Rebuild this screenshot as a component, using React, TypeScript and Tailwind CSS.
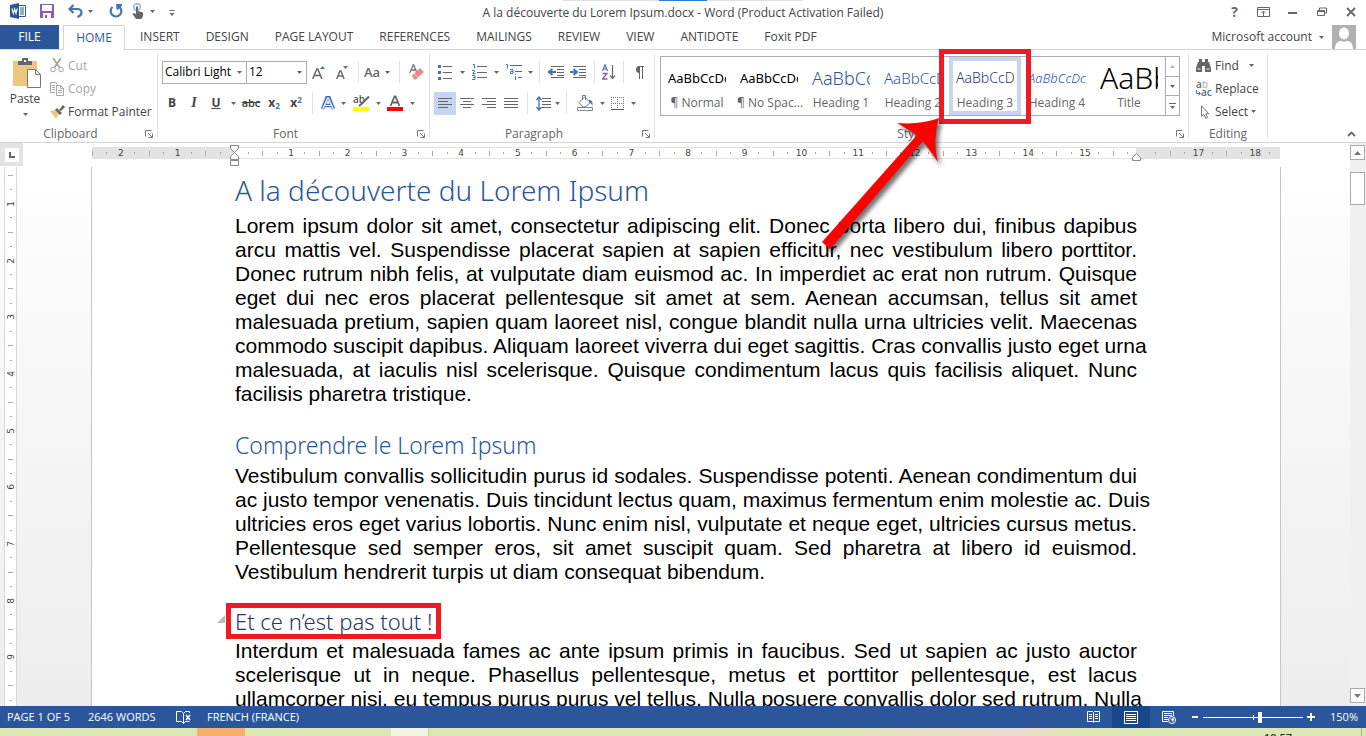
import { useState, type ReactNode } from 'react'
import clsx from 'clsx'

const TABS = ['INSERT', 'DESIGN', 'PAGE LAYOUT', 'REFERENCES', 'MAILINGS', 'REVIEW', 'VIEW', 'ANTIDOTE', 'Foxit PDF']

const STYLES = [
  { name: '¶ Normal', sample: 'AaBbCcDc', look: 'text-[13px] text-black' },
  { name: '¶ No Spac...', sample: 'AaBbCcDc', look: 'text-[13px] text-black' },
  { name: 'Heading 1', sample: 'AaBbCc', look: 'text-[18px] font-light text-[#2b579a]' },
  { name: 'Heading 2', sample: 'AaBbCcD', look: 'text-[15px] font-light text-[#2b579a]' },
  { name: 'Heading 3', sample: 'AaBbCcD', look: 'text-[14px] font-light text-[#1f3864]' },
  { name: 'Heading 4', sample: 'AaBbCcDc', look: 'text-[13px] italic font-light text-[#2b579a]' },
  { name: 'Title', sample: 'AaBb', look: 'text-[30px] font-light text-black' },
]

const RULER = ['2', '1', '', '1', '2', '3', '4', '5', '6', '7', '8', '9', '10', '11', '12', '13', '14', '15', '', '17', '18']
const VRULER = ['1', '2', '3', '4', '5', '6', '7', '8', '9', '10']

// one entry per line, broken where the document breaks
const INTRO = [
  'Lorem ipsum dolor sit amet, consectetur adipiscing elit. Donec porta libero dui, finibus dapibus',
  'arcu mattis vel. Suspendisse placerat sapien at sapien efficitur, nec vestibulum libero porttitor.',
  'Donec rutrum nibh felis, at vulputate diam euismod ac. In imperdiet ac erat non rutrum. Quisque',
  'eget dui nec eros placerat pellentesque sit amet at sem. Aenean accumsan, tellus sit amet',
  'malesuada pretium, sapien quam laoreet nisl, congue blandit nulla urna ultricies velit. Maecenas',
  'commodo suscipit dapibus. Aliquam laoreet viverra dui eget sagittis. Cras convallis justo eget urna',
  'malesuada, at iaculis nisl scelerisque. Quisque condimentum lacus quis facilisis aliquet. Nunc',
  'facilisis pharetra tristique.',
]

const SECOND = [
  'Vestibulum convallis sollicitudin purus id sodales. Suspendisse potenti. Aenean condimentum dui',
  'ac justo tempor venenatis. Duis tincidunt lectus quam, maximus fermentum enim molestie ac. Duis',
  'ultricies eros eget varius lobortis. Nunc enim nisl, vulputate et neque eget, ultricies cursus metus.',
  'Pellentesque sed semper eros, sit amet suscipit quam. Sed pharetra at libero id euismod.',
  'Vestibulum hendrerit turpis ut diam consequat bibendum.',
]

const THIRD = [
  'Interdum et malesuada fames ac ante ipsum primis in faucibus. Sed ut sapien ac justo auctor',
  'scelerisque ut in neque. Phasellus pellentesque, metus et porttitor pellentesque, est lacus',
  'ullamcorper nisi, eu tempus purus purus vel tellus. Nulla posuere convallis dolor sed rutrum. Nulla',
]

interface IconProps {
  w: number
  h: number
  children: ReactNode
  className?: string
}

function Icon({ w, h, children, className }: IconProps) {
  return (
    <svg width={w} height={h} viewBox={`0 0 ${w} ${h}`} fill="none" className={clsx('shrink-0', className)} aria-hidden="true">
      {children}
    </svg>
  )
}

function Caret({ className = 'text-[#666]' }: { className?: string }) {
  return (
    <Icon w={5} h={3} className={className}>
      <path d="M0 0h5L2.5 3z" fill="currentColor" />
    </Icon>
  )
}

function Tool({ label, className = 'w-[22px]', children }: { label: string; className?: string; children: ReactNode }) {
  return (
    <button type="button" aria-label={label} className={clsx('flex h-[23px] shrink-0 items-center justify-center hover:bg-[#d5e1f2]', className)}>
      {children}
    </button>
  )
}

function More({ label, className = 'w-2' }: { label: string; className?: string }) {
  return (
    <Tool label={`${label} options`} className={className}>
      <Caret />
    </Tool>
  )
}

function Sep() {
  return <span className="mx-[5px] h-[22px] w-px shrink-0 bg-[#e1e1e1]" />
}

function Group({ title, className, launcher = true, children }: { title: string; className: string; launcher?: boolean; children: ReactNode }) {
  return (
    <section aria-label={title} className={clsx('my-1 flex h-[84px] flex-col border-r border-[#e1e1e1]', className)}>
      <div className="h-[72px]">{children}</div>
      <div className={clsx('relative h-3 text-center leading-4 text-[#666]', launcher && 'pr-4')}>
        {title}
        {launcher && (
          <button type="button" aria-label={`${title} settings`} className="absolute right-1 top-1">
            <Icon w={8} h={8}>
              <path d="M.5 6.5v-6h6M3 3l4 4M7.500 3.500v4h-4" stroke="#777" />
            </Icon>
          </button>
        )}
      </div>
    </section>
  )
}

// horizontal text rows used by the alignment buttons
function Lines({ rows }: { rows: [number, number][] }) {
  return (
    <Icon w={14} h={10}>
      {rows.map(([x, width], i) => (
        <rect key={i} x={x} y={i * 3} width={width} height={1} fill="#666" />
      ))}
    </Icon>
  )
}

function TitleBar() {
  return (
    <header className="relative flex h-[25px] items-center justify-between">
      <div className="absolute inset-x-0 top-0 flex justify-center">
        <span className="h-px w-24 bg-[#e1e1e1]" />
        <span className="h-px w-12 bg-[#2b7cd3]" />
        <span className="h-px w-24 bg-[#e1e1e1]" />
      </div>
      <div className="flex items-center pb-[3px] pl-[10px]">
        <Icon w={16} h={16}>
          <path d="M8 2.500h7.500v11H8" fill="#fff" stroke="#2b579a" />
          <path d="M10 5h4M10 7h4M10 9h4M10 11h4" stroke="#2b579a" />
          <path d="M0 2l9-2v16l-9-2z" fill="#2b579a" />
          <path d="M2 5.500l1.300 5L4.700 6l1.300 4.500 1.300-5" stroke="#fff" strokeWidth="1.100" />
        </Icon>
        <button type="button" aria-label="Save" className="ml-[14px]">
          <Icon w={14} h={14}>
            <path d="M0 0h14v14H0z" fill="#8a5db0" />
            <path d="M2 1h10v6H2zM3 9h8v5H3z" fill="#fff" />
            <path d="M5 11h2v3H5z" fill="#8a5db0" />
          </Icon>
        </button>
        <button type="button" aria-label="Undo" className="ml-[14px]">
          <Icon w={16} h={14}>
            <path d="M5.500 1L1.500 5l4 4M2 5h7c3 0 4.500 1.500 4.500 3.500S12 12 9.500 13" stroke="#4472b4" strokeWidth="2.200" />
          </Icon>
        </button>
        <More label="Undo" className="w-[13px]" />
        <button type="button" aria-label="Redo" className="ml-3">
          <Icon w={14} h={14}>
            <path d="M3.500 3A5.400 5.400 0 1 0 10.500 3" stroke="#4472b4" strokeWidth="2.200" />
            <path d="M7 0h6v1.500L9 6 7.500 5z" fill="#4472b4" />
          </Icon>
        </button>
        <button type="button" aria-label="Touch/Mouse mode" className="ml-[9px]">
          <Icon w={12} h={16}>
            <circle cx="5" cy="4" r="3.300" stroke="#9db7dc" strokeWidth="1.600" />
            <path d="M4 3.500h2V8l5 1.500V13l-1.500 3H4L.5 11l1-1L4 11z" fill="#666" />
          </Icon>
        </button>
        <More label="Touch mode" className="w-[17px]" />
        <button type="button" aria-label="Customize Quick Access Toolbar" className="ml-2 mt-1">
          <Icon w={6} h={6}>
            <path d="M.5.5h5" stroke="#666" />
            <path d="M.5 3h5L3 6z" fill="#666" />
          </Icon>
        </button>
      </div>
      <h1 className="absolute left-1/2 -translate-x-1/2 whitespace-nowrap">
        A la découverte du Lorem Ipsum.docx - Word (Product Activation Failed)
      </h1>
      <div className="flex items-center pb-0.5">
        <button type="button" aria-label="Help" className="w-[29px] text-center text-[14px] font-bold leading-4 text-[#666]">?</button>
        <button type="button" aria-label="Ribbon display options" className="flex w-[29px] justify-center">
          <Icon w={13} h={10}>
            <path d="M.5.5h12v9H.5zM.5 2.500h12M6.500 9V4.500M4.500 6l2-2 2 2" stroke="#666" />
          </Icon>
        </button>
        <button type="button" aria-label="Minimize" className="flex w-[29px] justify-center">
          <Icon w={9} h={10}>
            <path d="M0 6h9" stroke="#666" strokeWidth="2" />
          </Icon>
        </button>
        <button type="button" aria-label="Restore" className="flex w-[29px] justify-center">
          <Icon w={10} h={10}>
            <path d="M2.500 3V1h7v5H8M.5 3.500h7v5h-7zM.5 4.500h7" stroke="#666" />
          </Icon>
        </button>
        <button type="button" aria-label="Close" className="flex w-[30px] justify-center">
          <Icon w={10} h={10}>
            <path d="M1 1l8 8M9 1L1 9" stroke="#666" strokeWidth="1.800" />
          </Icon>
        </button>
      </div>
    </header>
  )
}

function TabBar() {
  return (
    <nav className="flex h-[25px] items-stretch border-b border-[#d4d4d4]">
      <button type="button" className="w-[59px] bg-[#2b579a] text-white">FILE</button>
      <button type="button" className="-mb-px ml-1 w-[62px] border border-b-0 border-[#d4d4d4] bg-white text-[#2b579a]">HOME</button>
      <div className="flex flex-1 pl-0.5">
        {TABS.map((tab) => (
          <button key={tab} type="button" className="px-[13px] hover:text-[#2b579a]">{tab}</button>
        ))}
      </div>
      <button type="button" className="flex items-center gap-[7px]">
        Microsoft account
        <Caret />
      </button>
      <Icon w={24} h={24} className="ml-2 mr-[10px]">
        <path d="M0 0h24v24H0z" fill="#b1b1b1" />
        <ellipse cx="12" cy="8.500" rx="5" ry="6" fill="#fff" />
        <path d="M3 24c0-6 3-8 6-8l3 1 3-1c3 0 6 2 6 8z" fill="#fff" />
      </Icon>
    </nav>
  )
}

function Clipboard() {
  return (
    <Group title="Clipboard" className="w-[158px]">
      <div className="flex">
        <button type="button" className="flex w-[50px] shrink-0 flex-col items-center pt-1">
          <Icon w={28} h={30} className="ml-1">
            <path d="M0 3h24v25H0z" fill="#ecc77f" />
            <path d="M5 3h4V0h6v3h4v4H5z" fill="#666" />
            <path d="M11 2h2v2h-2z" fill="#fff" />
            <path d="M14.500 11.500h8l5 5v13h-13z" fill="#fff" stroke="#777" />
            <path d="M22.500 11.500v5h5" stroke="#777" />
          </Icon>
          <span className="mt-[3px] leading-4">Paste</span>
          <Caret className="mt-1.5 text-[#666]" />
        </button>
        <div className="flex flex-col items-start whitespace-nowrap">
          <button type="button" className="flex h-[23px] items-center gap-1 text-[#a6a6a6]">
            <Icon w={14} h={15}>
              <path d="M3 0l6.500 9.500M11 0L4.500 9.500" stroke="#a6a6a6" strokeWidth="1.800" />
              <circle cx="3" cy="11.500" r="2.300" stroke="#a6a6a6" />
              <circle cx="11" cy="11.500" r="2.300" stroke="#a6a6a6" />
            </Icon>
            Cut
          </button>
          <button type="button" className="flex h-[23px] items-center gap-1 text-[#a6a6a6]">
            <Icon w={14} h={14}>
              <path d="M5 10.500H.5V.5h5l2 2M2 3.500h3M2 5.500h3M2 7.500h3" stroke="#a6a6a6" />
              <path d="M6.500 3.500h4l3 3v7h-7zM10.500 3.500v3h3M8 8.500h4M8 10.500h4" stroke="#a6a6a6" />
            </Icon>
            Copy
          </button>
          <button type="button" className="flex h-[23px] items-center gap-[3px]">
            <Icon w={15} h={14}>
              <path d="M0 6l5-1 4 4-3 5z" fill="#ecc77f" />
              <path d="M5 5l2-2 5 5-2 2z" fill="#666" />
              <path d="M9 5l4-5 2 2-4 4z" fill="#666" />
            </Icon>
            Format Painter
          </button>
        </div>
      </div>
    </Group>
  )
}

function FontGroup() {
  return (
    <Group title="Font" className="w-[272px]">
      <div className="flex h-9 items-center pl-1">
        <label className="relative flex w-[85px] shrink-0 items-center">
          <span className="sr-only">Font name</span>
          <select className="h-[23px] w-full appearance-none border border-[#ababab] bg-white pl-0.5 text-black">
            <option>Calibri Light</option>
          </select>
          <Caret className="absolute right-[5px] text-[#666]" />
        </label>
        <label className="relative -ml-px flex w-[61px] shrink-0 items-center">
          <span className="sr-only">Font size</span>
          <select className="h-[23px] w-full appearance-none border border-[#ababab] bg-white pl-0.5 text-black">
            <option>12</option>
          </select>
          <Caret className="absolute right-[5px] text-[#666]" />
        </label>
        <Tool label="Grow font" className="w-6">
          <Icon w={14} h={13}>
            <path d="M.7 13L4.800 3h1l4.100 10M2.500 9.500h6" stroke="#666" strokeWidth="1.500" />
            <path d="M8 3l2.500-3L13 3z" fill="#4472b4" />
          </Icon>
        </Tool>
        <Tool label="Shrink font">
          <Icon w={13} h={13}>
            <path d="M.7 13l3.200-8h1l3.200 8M2 10h5" stroke="#666" strokeWidth="1.400" />
            <path d="M7 0h5L9.500 3z" fill="#4472b4" />
          </Icon>
        </Tool>
        <Sep />
        <Tool label="Change case" className="w-4">
          <span className="text-[13px] font-semibold text-[#666]">Aa</span>
        </Tool>
        <More label="Change case" className="w-[14px]" />
        <Sep />
        <Tool label="Clear formatting">
          <Icon w={15} h={16}>
            <path d="M.7 9L4.500.5 8 9M2 6h5" stroke="#777" strokeWidth="1.300" />
            <path d="M3 11.500L11 4l4 4-8 7.500H5z" fill="#e9898a" />
            <path d="M5 9.500l4 4" stroke="#fff" strokeWidth=".7" />
          </Icon>
        </Tool>
      </div>
      <div className="flex h-[26px] items-center pl-[3px] text-[#444]">
        <Tool label="Bold"><b>B</b></Tool>
        <Tool label="Italic"><i className="font-['Liberation_Serif'] text-[14px] font-bold">I</i></Tool>
        <Tool label="Underline"><u className="font-bold">U</u></Tool>
        <More label="Underline" className="w-3" />
        <Tool label="Strikethrough" className="w-6"><s className="text-[11px] font-semibold">abc</s></Tool>
        <Tool label="Subscript"><b>x<sub className="text-[8px] text-[#4472b4]">2</sub></b></Tool>
        <Tool label="Superscript"><b>x<sup className="text-[8px] text-[#4472b4]">2</sup></b></Tool>
        <Sep />
        <Tool label="Text effects" className="w-5">
          <Icon w={14} h={14}>
            <path d="M1.500 13L6 1.500h2L12.500 13M4 9.500h6" stroke="#a9c4ea" strokeWidth="4" />
            <path d="M1.500 13L6 1.500h2L12.500 13M4 9.500h6" stroke="#3a6ab4" strokeWidth="2.800" />
            <path d="M1.800 13L6.500 2h1L12.200 13M4 9.500h6" stroke="#fff" strokeWidth="1.200" />
          </Icon>
        </Tool>
        <More label="Text effects" className="w-[10px]" />
        <Tool label="Text highlight color" className="w-[26px]">
          <Icon w={17} h={16}>
            <text x="0" y="8" fontSize="10" fontWeight="600" fill="#555">ab</text>
            <path d="M16 1.500L9 8.500l-3 2.500" stroke="#666" strokeWidth="2" />
            <path d="M0 12h16v4H0z" fill="#ff0" />
          </Icon>
        </Tool>
        <More label="Highlight" className="w-2" />
        <Tool label="Font color" className="w-[26px]">
          <Icon w={16} h={16}>
            <path d="M3.500 11L7.500 1.500h1l4 9.500M5 7.500h6" stroke="#666" strokeWidth="1.800" />
            <path d="M0 12h16v4H0z" fill="#f00" />
          </Icon>
        </Tool>
        <More label="Font color" />
      </div>
    </Group>
  )
}

function ParagraphGroup() {
  return (
    <Group title="Paragraph" className="w-[225px]">
      <div className="flex h-9 items-center pl-0.5">
        <Tool label="Bullets" className="w-[26px]">
          <Icon w={14} h={15}>
            <path d="M0 0h3v3H0zM0 6h3v3H0zM0 12h3v3H0z" fill="#4472b4" />
            <path d="M5 1.500h9M5 7.500h9M5 13.500h9" stroke="#666" />
          </Icon>
        </Tool>
        <More label="Bullets" />
        <Tool label="Numbering" className="w-[26px]">
          <Icon w={15} h={16}>
            <path d="M1 .5h1.500v4M0 6.500h2.500v1L.5 9.500h3M0 11.500h3v4H0M1 13.500h2" stroke="#4472b4" />
            <path d="M5 2.500h10M5 8.500h10M5 13.500h10" stroke="#666" />
          </Icon>
        </Tool>
        <More label="Numbering" />
        <Tool label="Multilevel list" className="w-[26px]">
          <Icon w={17} h={16}>
            <path d="M1 .5h1.500v4M5 5.500h3v4H5.500v-2H8M10.500 10v1M10.500 12v4" stroke="#4472b4" />
            <path d="M5 1.500h12M10 7.500h7M13 13.500h4" stroke="#666" />
          </Icon>
        </Tool>
        <More label="Multilevel list" />
        <Sep />
        <Tool label="Decrease indent">
          <Icon w={16} h={12}>
            <path d="M3 .5h13M9 3.500h7M9 6.500h7M9 9.500h7M3 11.500h13" stroke="#666" />
            <path d="M8 6H2M4.500 3L1 6l3.500 3" stroke="#4472b4" strokeWidth="2" />
          </Icon>
        </Tool>
        <Tool label="Increase indent">
          <Icon w={16} h={12}>
            <path d="M3 .5h13M9 3.500h7M9 6.500h7M9 9.500h7M3 11.500h13" stroke="#666" />
            <path d="M0 6h6M3.500 3L7 6 3.500 9" stroke="#4472b4" strokeWidth="2" />
          </Icon>
        </Tool>
        <Sep />
        <Tool label="Sort" className="w-[18px]">
          <Icon w={14} h={16}>
            <path d="M.5 7L3 .8 5.500 7M1.500 5h3" stroke="#4472b4" strokeWidth="1.200" />
            <path d="M.5 9.500h4.500L.5 15H5.500" stroke="#8a5db0" strokeWidth="1.300" />
            <path d="M10.500 1v13M8 11.500l2.500 3 2.500-3" stroke="#666" strokeWidth="1.200" />
          </Icon>
        </Tool>
        <Sep />
        <Tool label="Show paragraph marks" className="w-5">
          <Icon w={10} h={13}>
            <path d="M10 .5H4M5.500 0v13M8.500 0v13" stroke="#666" />
            <path d="M5.500 0a3.500 3.500 0 0 0 0 7z" fill="#666" />
          </Icon>
        </Tool>
      </div>
      <div className="flex h-[26px] items-center pl-1">
        <Tool label="Align left" className="w-[22px] bg-[#c5d5f2]"><Lines rows={[[0, 14], [0, 10], [0, 14], [0, 10]]} /></Tool>
        <Tool label="Center"><Lines rows={[[0, 14], [3, 8], [0, 14], [3, 8]]} /></Tool>
        <Tool label="Align right"><Lines rows={[[0, 14], [5, 9], [0, 14], [5, 9]]} /></Tool>
        <Tool label="Justify"><Lines rows={[[0, 14], [0, 14], [0, 14], [0, 14]]} /></Tool>
        <Sep />
        <Tool label="Line spacing" className="w-5">
          <Icon w={15} h={15}>
            <path d="M3 2v11M.5 4L3 1l2.500 3M.5 11L3 14l2.500-3" stroke="#4472b4" strokeWidth="1.300" />
            <path d="M6 2.500h9M6 5.500h9M6 8.500h9M6 11.500h9" stroke="#666" />
          </Icon>
        </Tool>
        <More label="Line spacing" />
        <Sep />
        <Tool label="Shading" className="w-[26px]">
          <Icon w={17} h={16}>
            <path d="M2 7.500L7.500 2l6 5.500-5.500 4.500H6z" fill="#fff" stroke="#777" />
            <path d="M5.500 5V.5h3V5" stroke="#777" />
            <path d="M12 5c3 0 4 2 3.500 6-.5-2-1.500-3-3-3z" fill="#4472b4" />
            <path d="M.5 12.500h15v3H.5z" fill="#fff" stroke="#888" />
          </Icon>
        </Tool>
        <More label="Shading" />
        <Tool label="Borders">
          <Icon w={13} h={13}>
            <path d="M0 .5h13M0 6.500h13M.5 0v12M6.500 0v12M12.500 0v12" stroke="#777" strokeDasharray="1 1" />
            <path d="M0 12.500h13" stroke="#555" />
          </Icon>
        </Tool>
        <More label="Borders" className="w-[10px]" />
      </div>
    </Group>
  )
}

function PointerArrow() {
  return (
    <Icon w={135} h={145} className="pointer-events-none absolute -left-[134px] top-[57px] z-20 drop-shadow-[3px_4px_2px_rgba(0,0,0,0.55)]">
      <path d="M124 4Q106 11 82 9l20 12L7 128l8 7L108 27l15 21Q117 28 124 4z" fill="#f00" />
    </Icon>
  )
}

function StylesGroup({ current, onPick }: { current: string; onPick: (name: string) => void }) {
  return (
    <Group title="Styles" className="min-w-0 flex-1">
      <div className="flex pl-[5px] pt-0.5">
        <div className="flex h-[60px] border border-[#ababab]">
          {STYLES.map((s) => (
            <div key={s.name} className="relative">
              <button
                type="button"
                onClick={() => onPick(s.name)}
                className={clsx(
                  'flex h-full w-[72px] flex-col justify-end border-4',
                  s.name === current ? 'border-[#c5d5f2]' : 'border-transparent'
                )}
              >
                <span className={clsx("mb-1 ml-[3px] flex h-[26px] w-[58px] items-center overflow-hidden whitespace-nowrap font-['Noto_Sans']", s.look)}>{s.sample}</span>
                <span className="block w-full whitespace-nowrap text-center leading-4 text-[#666]">{s.name}</span>
              </button>
              {s.name === 'Heading 3' && (
                <>
                  <div className="pointer-events-none absolute -inset-x-[10px] -bottom-[9px] -top-2 z-10 border-[5px] border-[#ed1c24]" />
                  <PointerArrow />
                </>
              )}
            </div>
          ))}
        </div>
        <div className="-ml-px flex h-[60px] w-[15px] flex-col border border-[#ababab] text-[#666]">
          <button type="button" aria-label="Previous row" className="flex flex-1 items-center justify-center"><Caret className="rotate-180 text-[#bbb]" /></button>
          <button type="button" aria-label="Next row" className="flex flex-1 items-center justify-center border-y border-[#ababab]"><Caret /></button>
          <button type="button" aria-label="More styles" className="flex flex-1 flex-col items-center justify-center gap-0.5">
            <span className="h-px w-[7px] bg-[#666]" />
            <Caret />
          </button>
        </div>
      </div>
    </Group>
  )
}

function Editing() {
  return (
    <Group title="Editing" launcher={false} className="w-[79px]">
      <div className="flex flex-col items-start pl-[7px]">
        <button type="button" className="flex h-[23px] items-center gap-1">
          <Icon w={15} h={13}>
            <path d="M2 3h1V0h3v3h3V0h3v3h1l2 6v4H9V7H6v6H0V9z" fill="#666" />
            <path d="M1.500 10h3M10.500 10h3" stroke="#fff" />
          </Icon>
          <span className="pr-1.5">Find</span>
          <Caret />
        </button>
        <button type="button" className="flex h-[23px] items-center gap-[3px]">
          <Icon w={16} h={16}>
            <text x="0" y="7" fontSize="10" fontWeight="600" fill="#666">a<tspan fill="#b5b5b5">b</tspan></text>
            <text x="5" y="15" fontSize="10" fontWeight="600" fill="#666">a<tspan fill="#4472b4">c</tspan></text>
            <path d="M.5 9v3.500H4M2.500 10.500l2 2-2 2" stroke="#4472b4" />
          </Icon>
          Replace
        </button>
        <button type="button" className="flex h-[23px] items-center gap-[3px]">
          <Icon w={16} h={14}>
            <path d="M5.500.8v10.500l2.500-2 1.700 4 1.800-.8-1.700-3.700h3z" fill="#fff" stroke="#777" />
          </Icon>
          Select
          <Caret />
        </button>
      </div>
    </Group>
  )
}

function HorizontalRuler() {
  return (
    <div className="relative ml-[92px] mr-[70px] mt-1">
      <div className="flex h-3 overflow-hidden border-y border-[#e1e1e1] bg-white">
        <div className="-mr-[3px] grid flex-1 grid-cols-[repeat(21,minmax(0,1fr))]">
          {RULER.map((n, i) => (
            <div
              key={i}
              className={clsx(
                'flex items-center justify-between',
                (i < 2 || i > 18) && 'bg-[#e3e3e3]',
                i === 2 && 'bg-[linear-gradient(90deg,#e3e3e3_50%,#fff_50%)]',
                i === 18 && 'bg-[linear-gradient(90deg,#fff_40%,#e3e3e3_40%)]'
              )}
            >
              <span className="h-[5px] w-px bg-[#aaa]" />
              <span className="h-0.5 w-px bg-[#aaa]" />
              <span className="flex w-0 justify-center font-['DejaVu_Sans'] text-[9px] leading-none text-[#444]">{n}</span>
              <span className="h-0.5 w-px bg-[#aaa]" />
              <span className="w-0" />
            </div>
          ))}
        </div>
      </div>
      <Icon w={9} h={22} className="absolute left-[138px] -top-[2px]">
        <path d="M.5.5h8v3l-4 4-4-4zM.5 14.500v-3l4-4 4 4v3zM.5 15.500h8v5h-8z" fill="#fff" stroke="#888" />
      </Icon>
      <Icon w={9} h={8} className="absolute right-[139px] top-[6px]">
        <path d="M.5 7.500v-3l4-4 4 4v3z" fill="#fff" stroke="#888" />
      </Icon>
    </div>
  )
}

function VerticalRuler() {
  return (
    <div className="absolute bottom-0 left-1 top-0 w-[13px] overflow-hidden border-x border-[#d8d8d8] bg-white pt-2">
      <div className="grid h-[567px] grid-rows-[repeat(10,minmax(0,1fr))]">
        {VRULER.map((n) => (
          <div key={n} className="flex flex-col items-center justify-between">
            <span className="h-px w-[5px] bg-[#aaa]" />
            <span className="h-px w-0.5 bg-[#aaa]" />
            <span className="flex h-0 -rotate-90 items-center font-['DejaVu_Sans'] text-[9px] leading-none text-[#444]">{n}</span>
            <span className="h-px w-0.5 bg-[#aaa]" />
            <span className="h-0" />
          </div>
        ))}
      </div>
    </div>
  )
}

function Paragraph({ lines, open = false }: { lines: string[]; open?: boolean }) {
  return (
    <p className="whitespace-nowrap">
      {lines.map((line, i) => (
        <span key={i} className={clsx('block', (open || i < lines.length - 1) && '[text-align-last:justify]')}>
          {line}
        </span>
      ))}
    </p>
  )
}

function DocumentPage() {
  const heading = "font-['Noto_Sans'] font-light"
  return (
    <article className="ml-[91px] mr-[69px] h-full overflow-hidden border-x border-[#c6c6c6] bg-white px-[143px] font-['Liberation_Sans'] text-[21px] leading-6 text-black">
      <h2 className={clsx(heading, 'pb-[5px] pt-1 text-[28px] leading-[38px] text-[#2b579a]')}>A la découverte du Lorem Ipsum</h2>
      <Paragraph lines={INTRO} />
      <h3 className={clsx(heading, 'pb-1 pt-6 text-[23px] leading-[30px] text-[#2b579a]')}>Comprendre le Lorem Ipsum</h3>
      <Paragraph lines={SECOND} />
      <h4 className={clsx(heading, 'relative -ml-[9px] mt-[19px] w-fit border-[5px] border-[#ed1c24] px-1 text-[22px] leading-[26px] text-[#1f3864]')}>
        <Icon w={8} h={8} className="absolute -left-[14px] top-[7px]">
          <path d="M8 0v8H0z" fill="#bbb" />
        </Icon>
        Et ce n’est pas tout !
      </h4>
      <Paragraph lines={THIRD} open />
    </article>
  )
}

function ScrollBar() {
  return (
    <div className="flex w-4 flex-col bg-[#f0f0f0] pb-[3px] pr-px pt-0.5">
      <button type="button" aria-label="Scroll up" className="flex h-[15px] items-center justify-center border border-[#ababab] bg-white">
        <Icon w={7} h={4}><path d="M3.500 0L7 4H0z" fill="#777" /></Icon>
      </button>
      <div className="flex-1 pt-3">
        <div className="h-[33px] border border-[#ababab] bg-white" />
      </div>
      <button type="button" aria-label="Scroll down" className="flex h-[15px] items-center justify-center border border-[#ababab] bg-white">
        <Icon w={7} h={4}><path d="M0 0h7L3.500 4z" fill="#777" /></Icon>
      </button>
    </div>
  )
}

function StatusBar() {
  const [zoom, setZoom] = useState(57)
  return (
    <footer className="flex h-[22px] items-center bg-[#2b579a] pl-[7px] pr-2 text-[11px] text-white">
      <button type="button" className="w-[81px] text-left">PAGE 1 OF 5</button>
      <button type="button" className="w-[88px] text-left">2646 WORDS</button>
      <button type="button" aria-label="Proofing errors" className="w-[31px]">
        <Icon w={15} h={13}>
          <path d="M7.500 2.500L5.500.5h-5v10h5l2 2zM7.500 12.500v-10l2-2h4V2M7.500 12.500l2-2h4" stroke="#fff" />
          <path d="M10 4l4 5M14 4l-4 5" stroke="#fff" strokeWidth="1.500" />
        </Icon>
      </button>
      <button type="button">FRENCH (FRANCE)</button>
      <div className="ml-auto flex h-full items-center">
        <button type="button" aria-label="Read mode" className="flex h-full w-[38px] items-center justify-center">
          <Icon w={13} h={12}>
            <path d="M6.500 1.500v10M6.500 1.500L5.500.5h-5v10h5l1 1 1-1h5V.5h-5zM2 3.500h3M2 5.500h3M2 7.500h3M8 3.500h3M8 5.500h3M8 7.500h3" stroke="#fff" />
          </Icon>
        </button>
        <button type="button" aria-label="Print layout" className="flex h-full w-[38px] items-center justify-center bg-[#19478a]">
          <Icon w={14} h={13}>
            <path d="M.5.5h13v12H.5zM2 3.500h10M2 5.500h10M2 7.500h10M2 9.500h10" stroke="#fff" />
          </Icon>
        </button>
        <button type="button" aria-label="Web layout" className="flex h-full w-[38px] items-center justify-center">
          <Icon w={14} h={13}>
            <path d="M6 10.500H.5V.5h11V5M2 2.500h8M2 4.500h8M2 6.500h4M2 8.500h4" stroke="#fff" />
            <circle cx="10" cy="9" r="3.500" fill="#2b579a" stroke="#fff" />
            <path d="M8 7l2 1 1-1.500 1 1.500-1 3-1-1z" fill="#fff" />
          </Icon>
        </button>
        <button type="button" aria-label="Zoom out" className="ml-1 w-[11px]">
          <Icon w={6} h={8}><path d="M0 4h6" stroke="#fff" strokeWidth="2" /></Icon>
        </button>
        <div className="relative flex w-[100px] items-center">
          <span className="absolute left-[50px] h-[5px] w-px bg-white" />
          <input
            type="range"
            aria-label="Zoom level"
            value={zoom}
            onChange={(e) => setZoom(Number(e.target.value))}
            className="h-px w-full appearance-none bg-white [&::-webkit-slider-thumb]:h-[11px] [&::-webkit-slider-thumb]:w-1 [&::-webkit-slider-thumb]:appearance-none [&::-webkit-slider-thumb]:bg-white"
          />
        </div>
        <button type="button" aria-label="Zoom in" className="ml-1">
          <Icon w={8} h={8}><path d="M0 4h8M4 0v8" stroke="#fff" strokeWidth="2" /></Icon>
        </button>
        <button type="button" className="w-[43px] text-right">150%</button>
      </div>
    </footer>
  )
}

export default function App() {
  const [style, setStyle] = useState('Heading 3')

  return (
    <div className="flex h-screen flex-col overflow-hidden bg-white font-['Open_Sans',sans-serif] text-[12px] leading-4 text-[#444]">
      <TitleBar />
      <TabBar />
      <div className="flex border-b border-[#d4d4d4]">
        <Clipboard />
        <FontGroup />
        <ParagraphGroup />
        <StylesGroup current={style} onPick={setStyle} />
        <Editing />
        <div className="flex w-[98px] items-end justify-end pb-[5px] pr-[10px]">
          <button type="button" aria-label="Collapse the ribbon">
            <Icon w={9} h={6}><path d="M1 5l3.500-3.500L8 5" stroke="#666" strokeWidth="1.800" /></Icon>
          </button>
        </div>
      </div>

      <main className="flex min-h-0 flex-1 bg-gradient-to-b from-white to-[#ededed]">
        <div className="flex min-w-0 flex-1 flex-col">
          <div className="relative h-6">
            <button type="button" aria-label="Tab stop" className="absolute left-0 top-0 flex size-[23px] items-center justify-center bg-[#e3e3e3]">
              <span className="flex size-[14px] items-center justify-center bg-white">
                <span className="size-1.5 border-b-2 border-l-2 border-[#666]" />
              </span>
            </button>
            <HorizontalRuler />
          </div>
          <div className="relative min-h-0 flex-1">
            <VerticalRuler />
            <DocumentPage />
          </div>
        </div>
        <ScrollBar />
      </main>

      <StatusBar />
      <div className="flex h-2 overflow-hidden bg-[#dce6b2]">
        <span className="w-[197px]" />
        <span className="w-12 bg-[#f8ae6c]" />
        <span className="w-[146px]" />
        <span className="w-[38px] border-r border-[#c5cfa0] bg-[#f2f4e0]" />
        <span className="flex-1 bg-[linear-gradient(90deg,#dce6b2_60%,#ebd9cf_90%,#dce6b2)]" />
        <span className="w-[285px] border-r border-[#aab38a] pr-[69px] pt-[3px] text-right text-[11px] leading-[14px] text-black">10:57</span>
        <span className="w-1" />
      </div>
    </div>
  )
}
